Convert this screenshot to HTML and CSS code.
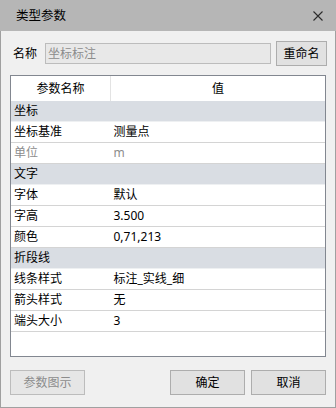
FILE: index.html
```html
<!DOCTYPE html>
<html lang="zh-CN">
<head>
    <meta charset="UTF-8">
    <title>类型参数</title>
    <link rel="stylesheet" href="styles.css">
</head>
<body>
    <div class="window">
        <div class="titlebar">
            <span class="title">类型参数</span>
            <svg class="close" width="10" height="10" viewBox="0 0 10 10">
                <path d="M0.5 0.5 L9.5 9.5 M9.5 0.5 L0.5 9.5" stroke="#2b2b2b" stroke-width="1.1" fill="none"/>
            </svg>
        </div>

        <div class="content">
            <div class="name-row">
                <label class="name-label">名称</label>
                <div class="name-input">坐标标注</div>
                <button class="btn rename">重命名</button>
            </div>

            <div class="grid">
                <table class="params">
                    <tr class="head">
                        <th class="col-name">参数名称</th>
                        <th>值</th>
                    </tr>
                    <tr class="group"><td colspan="2">坐标</td></tr>
                    <tr><td>坐标基准</td><td>测量点</td></tr>
                    <tr class="disabled"><td>单位</td><td>m</td></tr>
                    <tr class="group"><td colspan="2">文字</td></tr>
                    <tr><td>字体</td><td>默认</td></tr>
                    <tr><td>字高</td><td>3.500</td></tr>
                    <tr><td>颜色</td><td>0,71,213</td></tr>
                    <tr class="group"><td colspan="2">折段线</td></tr>
                    <tr><td>线条样式</td><td>标注_实线_细</td></tr>
                    <tr><td>箭头样式</td><td>无</td></tr>
                    <tr><td>端头大小</td><td>3</td></tr>
                </table>
            </div>

            <div class="footer">
                <button class="btn" disabled>参数图示</button>
                <span class="spacer"></span>
                <button class="btn">确定</button>
                <button class="btn">取消</button>
            </div>
        </div>
    </div>
</body>
</html>
```

FILE: styles.css
```css
body { margin: 0; background: #f0f0f0; font-family: "Noto Sans", "Noto Sans CJK SC", sans-serif; font-size: 12px; color: #000; }
.window { width: 336px; height: 408px; display: flex; flex-direction: column; background: #f0f0f0; }
.titlebar { height: 31px; flex: none; background: #b6b6b6; display: flex; align-items: center; justify-content: space-between; padding: 0 13px 0 16px; }
.title { font-size: 12.5px; line-height: 16px; color: #000; }
.close { display: block; margin-top: 1px; }
.content { flex: 1; display: flex; flex-direction: column; border: 1px solid #a0a0a0; border-top: none; padding: 10px 9px 0 9px; }

.name-row { display: flex; align-items: center; height: 25px; margin: 0 -1px 0 3px; }
.name-label { width: 24px; line-height: 16px; margin-right: 8px; }
.name-input { width: 220px; height: 19px; line-height: 19px; padding: 0 2px; border: 1px solid #bcbcbc; background: #e8e8e8; color: #8c8c8c; margin-right: 5px; }

.btn { font: inherit; color: #000; background: #e1e1e1; border: 1px solid #adadad; height: 25px; width: 75px; padding: 0; line-height: 16px; }
.btn.rename { width: 51px; }
.btn:disabled { color: #8c8c8c; background: #e6e6e6; border-color: #bcbcbc; }

.grid { margin-top: 9px; height: 282px; box-sizing: border-box; border: 1px solid #828790; background: #fff; }
.params { width: 100%; border-collapse: collapse; table-layout: fixed; }
.params th { height: 25px; padding: 0; font-weight: normal; text-align: center; line-height: 16px; }
.params th.col-name { width: 99px; border-right: 1px solid #e3e3e3; }
.params td { height: 20px; padding: 0 0 0 3px; border-bottom: 1px solid #d4d4d4; line-height: 16px; white-space: nowrap; }
.params .group td { background: #d9dde3; border-bottom-color: #eef0f2; }
.params .disabled td { color: #8c8c8c; }

.footer { display: flex; gap: 6px; margin-top: 13px; }
.spacer { flex: 1; }
```
